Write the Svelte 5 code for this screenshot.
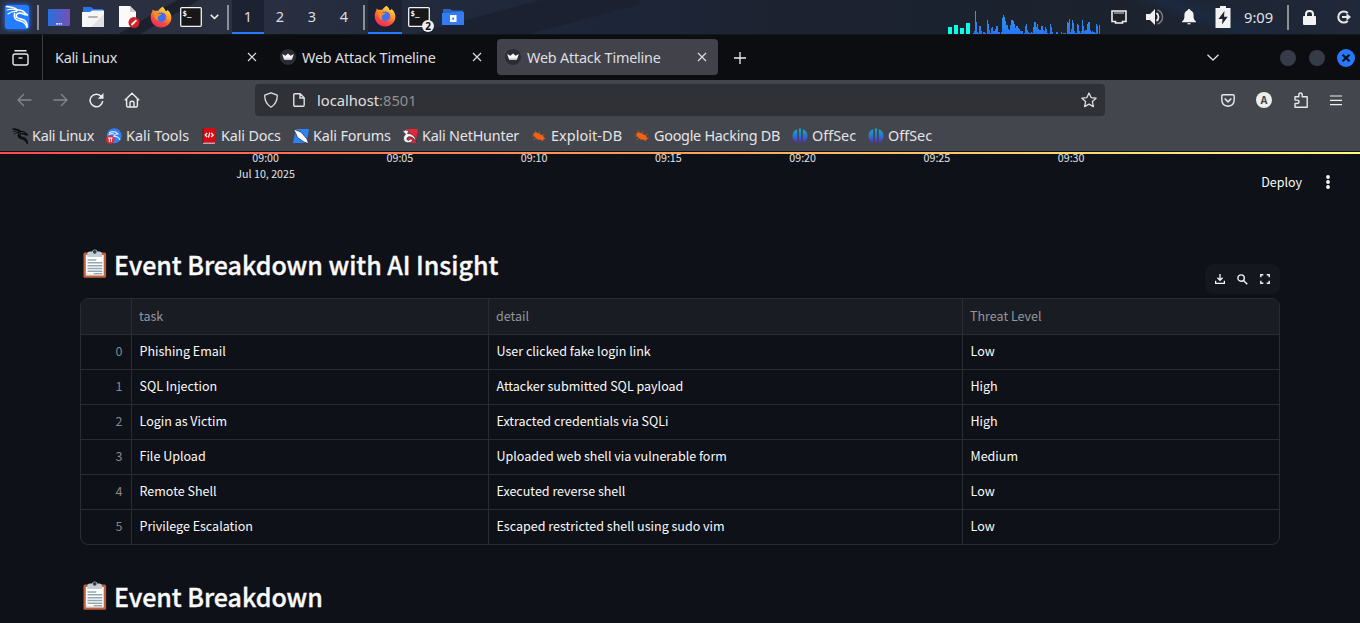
<script>
  const bars = [1,3,23,12,2,1,8,8,3,0,2,2,1,0,14,10,4,1,6,7,3,3,5,8,8,2,2,0,2,16,19,17,13,9,9,5,4,9,14,14,13,10,6,8,8,6,5,3,3,3,0,1,8,10,4,2,1,1,2,1,7,12,12,7,10,5,4,4,8,8,4,3,7,5,1,0,1,10,7,2,0,0,0,2,2,0,0,0,2,0,1,1,1,0,12,11,15,2,5,14,11,3,1,1,10,9,3,1,3,14,8,3,4,4,10,12,12,4,2,3,2,2,1,10,8,0,9];
  const meters = [7, 9, 6, 11];
  const bookmarks = [
    { icon: 'dragon', label: 'Kali Linux', w: 94, s: -0.28 },
    { icon: 'tools', label: 'Kali Tools', w: 95, s: 0 },
    { icon: 'docs', label: 'Kali Docs', w: 92, s: -0.15 },
    { icon: 'forums', label: 'Kali Forums', w: 109, s: -0.15 },
    { icon: 'hunter', label: 'Kali NetHunter', w: 129, s: -0.22 },
    { icon: 'bug', label: 'Exploit-DB', w: 103, s: 0.08 },
    { icon: 'bug', label: 'Google Hacking DB', w: 158, s: -0.27 },
    { icon: 'offsec', label: 'OffSec', w: 76, s: 0 },
    { icon: 'offsec', label: 'OffSec', w: 76, s: 0 }
  ];
  const ticks = ['09:00', '09:05', '09:10', '09:15', '09:20', '09:25', '09:30'];
  const rows = [
    ['Phishing Email', 'User clicked fake login link', 'Low'],
    ['SQL Injection', 'Attacker submitted SQL payload', 'High'],
    ['Login as Victim', 'Extracted credentials via SQLi', 'High'],
    ['File Upload', 'Uploaded web shell via vulnerable form', 'Medium'],
    ['Remote Shell', 'Executed reverse shell', 'Low'],
    ['Privilege Escalation', 'Escaped restricted shell using sudo vim', 'Low']
  ];
</script>

{#snippet dragonPath(color, sw)}
  <g fill="none" stroke={color} stroke-width={sw} stroke-linecap="round" stroke-linejoin="round">
    <path d="M2 5C6 3.6 9.5 4 12 5.4M3 9C6 6.6 9 6 12 6.6" stroke-width={sw * 0.7} />
    <path d="M1.5 1.5C6 1.8 10 2.6 12.5 5C15 4.8 18 5.6 19.5 7.5L22.5 10L19 9.4C15.5 7.4 11 7.8 11.2 11C11.5 14.2 16 13 19.2 15.2C21.5 16.8 22.4 19 22 22.3C20.8 18.4 18 16.6 14.5 15.8C10 14.8 8.4 12 9.6 8.4" />
  </g>
{/snippet}

{#snippet firefox()}
  <svg class="ff" width="22" height="22" viewBox="0 0 22 22">
    <defs>
      <linearGradient id="fire" x1=".8" y1="0" x2=".25" y2="1"><stop offset="0" stop-color="#fff14a" /><stop offset=".35" stop-color="#ffa42b" /><stop offset=".7" stop-color="#ff4a3c" /><stop offset="1" stop-color="#ed2564" /></linearGradient>
    </defs>
    <path d="M12.5.7C14 1.8 15.2 3.4 15.5 5C17 5.3 17.4 4.7 17.3 3.7C20 5.8 21.5 8.7 21.4 12C21.2 17.4 16.7 21.4 11.2 21.4C5.2 21.4.8 17 .7 11.2C.7 8.8 1.3 6.8 2.3 5.4L2.7 3.6L4.7 5.1C6 4.6 7 4.7 8.2 5C9 3.3 10.7 2 12.5.7Z" fill="url(#fire)" />
    <circle cx="11" cy="11.4" r="4.9" fill="#3b72f0" />
    <path d="M3.8 7.8C5.2 6.8 7 6.9 8.8 7.8L11.6 8.1C11.2 9.5 9.4 9.4 8.2 10.5C7.2 11.6 7.7 13.8 9 15C5.8 14.4 4 11.6 3.8 7.8Z" fill="#ff8b22" />
    <path d="M13.3 7.4C15.3 8.4 16 11 15 13.3" fill="none" stroke="#8a55df" stroke-width="1.6" />
  </svg>
{/snippet}

{#snippet terminal(dx)}
  <svg width="22" height="20" viewBox="0 0 22 20" style:margin-left={dx}>
    <rect x=".7" y=".7" width="20.6" height="18.6" rx="1" fill="#171717" stroke="#f2f2f2" stroke-width="1.3" />
    <text x="2.5" y="9.3" class="prompt">$_</text>
  </svg>
{/snippet}

{#snippet crown()}
  <svg width="16" height="16" viewBox="0 0 16 16">
    <circle cx="8" cy="8" r="8" fill="#2b2c36" />
    <path d="M2.2 5L5.3 6.7L8 4.4L10.7 6.7L13.8 5L12.2 9.8Q11.8 11 10.5 11H5.5Q4.2 11 3.8 9.8Z" fill="#f6f6f6" />
    <path d="M4.5 9.3H11.5L11 11H5Z" fill="#c8c8c8" />
  </svg>
{/snippet}

{#snippet cross()}
  <svg class="cross" width="10" height="10" viewBox="0 0 10 10"><path d="M1 1L9 9M9 1L1 9" stroke="#dedede" stroke-width="1.15" /></svg>
{/snippet}

{#snippet clipboard()}
  <svg class="clip" width="24" height="30" viewBox="0 0 24 30">
    <rect x=".5" y="3.5" width="22.6" height="25.3" rx="1.6" fill="#c2613f" />
    <path d="M2.8 6H20.7V26.5H10L2.8 24.5Z" fill="#fff" />
    <path d="M2.8 24.6H9V26.6H2.8Z" fill="#e0e7ea" />
    <path d="M4.3 8V5Q4.3 2.5 7 2.5H9Q9.8.4 11.7.4Q13.8.4 14.5 2.5H16.6Q19 2.5 19 5V8Z" fill="#c2ced6" />
    <circle cx="11.7" cy="2.8" r="1.9" fill="#34404a" />
    <path d="M4.5 11H13.3M4.5 13.8H19.3M4.5 16.7H19.3M4.5 19.5H19.3M4.5 22.2H19.3M10.5 24.8H19.3" stroke="#92a7b2" stroke-width="1.4" />
  </svg>
{/snippet}

<div class="screen">
  <header class="panel">
    <svg class="kali" width="24" height="24" viewBox="0 0 24 24">
      <rect width="24" height="24" rx="1.5" fill="#247cff" />
      {@render dragonPath('#fff', 1.6)}
    </svg>
    <i class="bar b1"></i>
    <svg class="desk" width="22" height="17" viewBox="0 0 22 17">
      <defs><linearGradient id="desk"><stop stop-color="#2870df" /><stop offset="1" stop-color="#7550b5" /></linearGradient></defs>
      <rect width="22" height="17" rx="1" fill="url(#desk)" />
      <path d="M8 14.8H10M10.5 14.8H12M12.5 14.8H14" stroke="#fff" stroke-width="1.3" />
    </svg>
    <svg class="folder" width="22" height="20" viewBox="0 0 22 20">
      <path d="M1 0H9L11.5 2H21V10H1Z" fill="#2b74e8" />
      <path d="M0 5H8L10 3.5H22V20H0Z" fill="#f6f6f6" /><path d="M22 7L9 20H22Z" fill="#e1e1e1" />
      <path d="M7 10H15" stroke="#b3b3b3" stroke-width="1.8" stroke-linecap="round" />
    </svg>
    <svg class="edit" width="21" height="22" viewBox="0 0 21 22">
      <path d="M0 0H11L17 6V21H0Z" fill="#fafafa" /><path d="M11 0V6H17Z" fill="#cdcdcd" />
      <circle cx="15" cy="16.5" r="5.5" fill="#d41f26" /><path d="M12.5 19L17.4 14.1" stroke="#fff" stroke-width="1.8" />
    </svg>
    <span class="ffa">{@render firefox()}</span>
    {@render terminal('8px')}
    <svg class="chev" width="9" height="6" viewBox="0 0 9 6"><path d="M.8.9L4.5 4.5L8.2.9" fill="none" stroke="#f2f2f2" stroke-width="1.5" /></svg>
    <i class="bar b2"></i>
    <nav class="spaces">
      {#each [1, 2, 3, 4] as n}<span class:on={n === 1}>{n}</span>{/each}
    </nav>
    <i class="bar b3"></i>
    <span class="task">{@render firefox()}</span>
    <span class="termtask">{@render terminal('0')}<b>2</b></span>
    <svg class="files" width="22" height="16" viewBox="0 0 22 16">
      <path d="M1 0H8L10 1.5H21V6H1Z" fill="#2566c8" /><path d="M0 4H8L10 3H22V16H0Z" fill="#347cf1" />
      <rect x="8" y="6" width="6.5" height="7" fill="#fff" /><rect x="10.2" y="8.7" width="2" height="2" fill="#347cf1" />
    </svg>
    <svg class="graph" width="153" height="24" viewBox="0 0 153 24" shape-rendering="crispEdges">
      <defs><linearGradient id="wave" gradientUnits="userSpaceOnUse" x1="0" y1="0" x2="0" y2="24"><stop stop-color="#27a7ea" /><stop offset="1" stop-color="#2874f4" /></linearGradient></defs>
      {#each meters as h, i}<rect x={i * 6} y={24 - h} width="4" height={h} fill="#08ffe5" />{/each}
      {#each bars as h, i}<rect x={25 + i} y={24 - h} width="1" height={h} fill="url(#wave)" />{/each}
    </svg>
    <svg class="net" width="16" height="14" viewBox="0 0 16 14"><path d="M1 1H15V11.5H11.5V13H4.5V11.5H1Z" fill="#20222a" stroke="#f0f0f0" stroke-width="1.6" /><path d="M4 1.5V4M6 1.5V4M8 1.5V4M10 1.5V4M12 1.5V4" stroke="#ddd" /></svg>
    <svg class="vol" width="18" height="16" viewBox="0 0 18 16"><path d="M0 5H4L9 0V16L4 11H0Z" fill="#f0f0f0" /><path d="M10.5 4Q12.5 5.5 12.5 8Q12.5 10.5 10.5 12" fill="none" stroke="#eee" stroke-width="1.8" /><path d="M11.5 1Q16.5 3 16.5 8Q16.5 13 11.5 15" fill="none" stroke="#77797e" stroke-width="1.5" /></svg>
    <svg class="bell" width="14" height="16" viewBox="0 0 14 16"><path d="M7 0Q8.2 0 8.3 1.2Q11.5 2.2 11.6 6V8.5Q11.8 10.8 14 12.5V13.2H0V12.5Q2.2 10.8 2.4 8.5V6Q2.5 2.2 5.7 1.2Q5.8 0 7 0Z" fill="#f2f2f2" /><path d="M5.5 14.7H8.5" stroke="#ddd" stroke-width="1.3" /></svg>
    <svg class="batt" width="16" height="22" viewBox="0 0 16 22"><path d="M5 0H11V2H15.5V22H.5V2H5Z" fill="#f2f2f2" /><path d="M9.5 5L3.5 13H7.5L7 18.5L12.7 10.8H9Z" fill="#20222b" /></svg>
    <span class="clock">9:09</span>
    <i class="bar b4"></i>
    <svg class="lock" width="13" height="15" viewBox="0 0 13 15"><rect y="6" width="13" height="9" rx="1" fill="#f2f2f2" /><path d="M3 7V4.2Q3 1 6.5 1T10 4.2V7" fill="none" stroke="#f2f2f2" stroke-width="2" /></svg>
    <svg class="out" width="14" height="14" viewBox="0 0 14 14"><path d="M10.8 3A5.6 5.6 0 1 0 10.8 11" fill="none" stroke="#e7e7e7" stroke-width="2" /><path d="M5 6H9.5V3.3L14 7L9.5 10.7V8H5Z" fill="#e7e7e7" /></svg>
  </header>

  <div class="tabs">
    <div class="view"><svg width="17" height="16" viewBox="0 0 17 16" fill="none" stroke="#e8e8e8" stroke-width="1.4"><path d="M3 .8H14" stroke-linecap="round" /><rect x="1" y="4" width="15" height="11" rx="2" /><path d="M6.5 8H10.5" /></svg></div>
    <div class="tab first"><span>Kali Linux</span>{@render cross()}</div>
    <div class="tab">{@render crown()}<span>Web Attack Timeline</span>{@render cross()}</div>
    <div class="tab active">{@render crown()}<span>Web Attack Timeline</span>{@render cross()}</div>
    <svg class="plus" width="12" height="12" viewBox="0 0 12 12"><path d="M6 0V12M0 6H12" stroke="#eee" stroke-width="1.3" /></svg>
    <svg class="down" width="12" height="7" viewBox="0 0 12 7"><path d="M.5.7L6 6L11.5.7" fill="none" stroke="#ddd" stroke-width="1.3" /></svg>
    <i class="dot d1"></i><i class="dot d2"></i>
    <svg class="close" width="18" height="18" viewBox="0 0 18 18"><circle cx="9" cy="9" r="9" fill="#2777ff" /><path d="M5.5 5.7L12.5 12.3M12.5 5.7L5.5 12.3" stroke="#0d0f14" stroke-width="2.2" /></svg>
  </div>

  <div class="chrome">
    <div class="toolbar">
      <svg class="back" width="15" height="14" viewBox="0 0 15 14" fill="none" stroke="#85868b" stroke-width="1.3"><path d="M7 1L1 7L7 13M1 7H14.5" /></svg>
      <svg class="fwd" width="15" height="14" viewBox="0 0 15 14" fill="none" stroke="#85868b" stroke-width="1.3"><path d="M8 1L14 7L8 13M14 7H.5" /></svg>
      <svg class="reload" width="15" height="15" viewBox="0 0 15 15"><path d="M12.5 3.7A6.3 6.3 0 1 0 13.7 8" fill="none" stroke="#eee" stroke-width="1.5" /><path d="M14.5 0V5.8H8.8Z" fill="#eee" /></svg>
      <svg class="home" width="16" height="16" viewBox="0 0 16 16" fill="none" stroke="#eee" stroke-width="1.4" stroke-linejoin="round"><path d="M.8 8.3L8 1.3L15.2 8.3M2.6 7V13.8Q2.6 15 3.8 15H12.2Q13.4 15 13.4 13.8V7M6 15V10.5Q6 9.3 8 9.3T10 10.5V15" /></svg>
      <div class="url">
        <svg width="14" height="16" viewBox="0 0 14 16"><path d="M7 .8L13.2 3.2Q13.7 10.5 7 15.2Q.3 10.5.8 3.2Z" fill="none" stroke="#e0e0e0" stroke-width="1.3" stroke-linejoin="round" /></svg>
        <svg class="doc" width="12" height="14" viewBox="0 0 12 14"><path d="M2 .8H7.2L11.2 4.8V12Q11.2 13.2 10 13.2H2Q.8 13.2.8 12V2Q.8.8 2 .8ZM7 1V5H11" fill="none" stroke="#e0e0e0" stroke-width="1.4" /></svg>
        <span class="host">localhost<em>:8501</em></span>
        <svg class="star" width="16" height="16" viewBox="0 0 16 16"><path d="M8 1L10.1 5.6L15.1 6.2L11.4 9.6L12.4 14.6L8 12.1L3.6 14.6L4.6 9.6L.9 6.2L5.9 5.6Z" fill="none" stroke="#ddd" stroke-width="1.3" stroke-linejoin="round" /></svg>
      </div>
      <svg class="pocket" width="14" height="13" viewBox="0 0 14 13" fill="none" stroke="#e8e8e8" stroke-width="1.4"><path d="M2 .8H12Q13.2.8 13.2 2V5.8Q13 12 7 12.2Q1 12 .8 5.8V2Q.8.8 2 .8Z" /><path d="M3.7 4.5L7 7.8L10.3 4.5" stroke-width="1.6" /></svg>
      <span class="avatar">A</span>
      <svg class="ext" width="14" height="16" viewBox="0 0 14 16"><path d="M1 4.7H4.8V3Q4.8 1 6.5 1T8.2 3V4.7H13.2V15.2H1V11.5H3Q5 11.5 5 9.8T3 8.1H1Z" fill="none" stroke="#e8e8e8" stroke-width="1.4" stroke-linejoin="round" /></svg>
      <svg class="menu" width="12" height="11" viewBox="0 0 12 11"><path d="M0 1H12M0 5.3H12M0 9.6H12" stroke="#eee" stroke-width="1.2" /></svg>
    </div>
    <nav class="marks">
      {#each bookmarks as b}
        <a style:width="{b.w}px" style:letter-spacing="{b.s}px">
          <svg width="16" height="16" viewBox="0 0 16 16">
            {#if b.icon === 'dragon'}
              <g transform="scale(.69)">{@render dragonPath('#0a0b0c', 2)}</g>
            {:else if b.icon === 'tools'}
              <circle cx="8.2" cy="7.8" r="7.5" fill="#327ff8" />
              <path d="M3 5Q8 2 12 6Q8 6 8 8.5Q12 8 14 12M2.5 7Q5 5 8 6" fill="none" stroke="#d9e8ff" stroke-width="1.2" />
              <circle cx="4.3" cy="11.6" r="4.2" fill="#ec2734" /><path d="M2 10H6.6M3.4 10V14M5.4 10V14" stroke="#fff" stroke-width="1" />
            {:else if b.icon === 'docs'}
              <path d="M2 0H14V15H2Z" fill="#d40d16" /><path d="M2 15.2H14" stroke="#e6d9d9" /><path d="M2 0V15" stroke="#601a20" />
              <path d="M6.2 5L4.2 7L6.2 9M10.2 5L12.2 7L10.2 9M8.8 4.5L7.5 9.5" fill="none" stroke="#fff" stroke-width="1.2" />
            {:else if b.icon === 'forums'}
              <path d="M3 1H16L13.5 15H0Z" fill="#2b83fb" /><path d="M.3 1L5 2.8L8 4L14 11L15.7 15.7L11 14L4.5 9.5L3 6Z" fill="#f6f7f8" stroke="#20252e" stroke-width=".7" />
            {:else if b.icon === 'hunter'}
              <path d="M3 1H16L13.5 15H5Z" fill="#e92435" />
              <path d="M.6 3.4Q3 1 7 3L5.5 5.5Q12.5 5 14.6 14Q10 7.4 6 9Q3.6 11 6 12.6L9.5 10.6L10.6 13.4Q5 16.4 2 13Q0 9 3.6 6Z" fill="#f5f5f5" stroke="#20252e" stroke-width=".7" />
            {:else if b.icon === 'bug'}
              <path d="M2 6Q4.5 3.3 8 5.7L12 7.6L13 9.7L15 10.7L12.5 11.3L12 13L9 11.6Q6 12 5 10Q3 9 2 6Z" fill="#f26213" />
              <path d="M5 5L4 2.5M8 6L8.5 3.5M3 8L.7 8M4.5 10.5L2.2 11.8M11 7.5L13.5 6" stroke="#c85a20" stroke-width=".8" />
            {:else}
              <defs><linearGradient id="off" gradientUnits="userSpaceOnUse" x1="0" y1="0" x2="0" y2="16"><stop stop-color="#12b0c4" /><stop offset=".5" stop-color="#2b74cf" /><stop offset="1" stop-color="#5a1fdc" /></linearGradient></defs>
              <path d="M5.2 1.3V14.7Q.5 12.9.5 8T5.2 1.3ZM10.8 1.3V14.7Q15.5 12.9 15.5 8T10.8 1.3Z" fill="url(#off)" />
              <path d="M7 .6H9V12L8.4 15.6H7.6L7 12Z" fill="url(#off)" />
            {/if}
          </svg>
          <span>{b.label}</span>
        </a>
      {/each}
    </nav>
  </div>
  <div class="rainbow"></div>

  <main>
    <section class="top">
      <div class="axis">
        {#each ticks as t, i}
          <div><span>{t}</span>{#if i === 0}<span>Jul 10, 2025</span>{/if}</div>
        {/each}
      </div>
      <div class="deploy"><span>Deploy</span><svg width="4" height="14" viewBox="0 0 4 14" fill="#fafafa"><circle cx="2" cy="2" r="1.9" /><circle cx="2" cy="7" r="1.9" /><circle cx="2" cy="12" r="1.9" /></svg></div>
    </section>

    <div class="headline">
      <h3>{@render clipboard()}<span>Event Breakdown with AI Insight</span></h3>
      <div class="tools">
        <svg width="10" height="10" viewBox="0 0 10 10" fill="none" stroke="#f5f5f5" stroke-width="1.3"><path d="M5 0V6M2.4 3.7L5 6.3L7.6 3.7M.6 6.8V9.3H9.4V6.8" /></svg>
        <svg width="11" height="11" viewBox="0 0 11 11" fill="none" stroke="#f5f5f5" stroke-width="1.4"><circle cx="4.1" cy="4.1" r="3.2" /><path d="M6.5 6.5L10.3 10.3" /></svg>
        <svg width="10" height="10" viewBox="0 0 10 10" fill="none" stroke="#f5f5f5" stroke-width="1.4"><path d="M.8 3.3V.8H3.3M6.7.8H9.2V3.3M9.2 6.7V9.2H6.7M3.3 9.2H.8V6.7" /></svg>
      </div>
    </div>

    <div class="table">
      <div class="row head"><span></span><span>task</span><span>detail</span><span>Threat Level</span></div>
      {#each rows as r, i}
        <div class="row"><span class="idx">{i}</span>{#each r as c}<span>{c}</span>{/each}</div>
      {/each}
    </div>

    <h3 class="second">{@render clipboard()}<span>Event Breakdown</span></h3>
  </main>
</div>

<style>
  :global(body) { margin: 0; background: #0e1117; overflow: hidden; }
  .screen { width: 1360px; height: 623px; overflow: hidden; background: #0e1117; color: #fafafa; font-family: "Noto Sans", sans-serif; }
  svg { display: block; flex: none; }

  .panel { display: flex; align-items: center; height: 35px; box-sizing: border-box; border-bottom: 1px solid #15161b;
    background:
      linear-gradient(150deg, transparent 0 48%, #151922b0 49% 58%, transparent 60%) 75px 0 / 150px 35px no-repeat,
      linear-gradient(165deg, transparent 40%, #1b2131 42% 70%, transparent 72%) 380px 0 / 260px 35px no-repeat,
      linear-gradient(20deg, transparent 35%, #1b2940 45%, transparent 65%) 1120px 0 / 200px 35px no-repeat,
      linear-gradient(90deg, #282e3f 0, #2c3142 16%, #232b3d 28%, #1d2639 45%, #1d2230 58%, #1b222f 70%, #1c222d 82%, #20283a 100%); }
  .panel > * { flex: none; }
  .kali { margin: 0 0 0 5px; box-shadow: 0 0 5px #2878ff; border-radius: 2px; }
  .bar { width: 2px; height: 25px; background: #8d9097; }
  .b1 { margin-left: 8px; }
  .desk { margin-left: 9px; }
  .folder { margin-left: 12px; }
  .edit { margin-left: 15px; }
  .ffa { margin-left: 10px; }
  .prompt { font: bold 7.5px "DejaVu Sans Mono", monospace; fill: #fff; }
  .chev { margin-left: 8px; }
  .b2 { margin-left: 8px; }
  .spaces { display: flex; margin-left: 3px; height: 34px; }
  .spaces span { width: 32px; text-align: center; font-size: 14.5px; line-height: 33px; color: #dedfe2; box-sizing: border-box; }
  .spaces .on { background: #1c2231; border-bottom: 2px solid #2777ff; }
  .b3 { margin-left: 3px; }
  .task { display: flex; justify-content: center; align-items: center; width: 34px; height: 34px; box-sizing: border-box; margin-left: 3px; background: #1c2231; border-bottom: 2px solid #2777ff; }
  .termtask { position: relative; margin-left: 6px; }
  .termtask b { position: absolute; left: 14px; top: 13px; width: 12px; height: 12px; border-radius: 50%; background: #eee; color: #111; font-size: 10px; line-height: 12px; text-align: center; }
  .files { margin-left: 12px; }
  .graph { margin-left: 484px; align-self: flex-end; }
  .net { margin-left: 10px; }
  .vol { margin-left: 19px; }
  .bell { margin-left: 18px; }
  .batt { margin-left: 19px; margin-top: -1px; }
  .clock { margin-left: 13px; width: 31px; font-size: 14.7px; line-height: 32px; color: #e2e3e6; }
  .b4 { margin-left: 12px; }
  .lock { margin-left: 14px; }
  .out { margin-left: 21px; }

  .tabs { display: flex; align-items: center; height: 45px; background: #0c0d10; font-size: 14.4px; letter-spacing: -.2px; color: #dedee0; }
  .tabs > * { flex: none; }
  .view { display: flex; align-items: center; justify-content: center; width: 43px; padding-right: 2px; box-sizing: border-box; height: 45px; border-right: 1px solid #3e3f43; }
  .tab { display: flex; align-items: center; box-sizing: border-box; width: 221px; height: 36px; padding: 0 11px 0 8px; margin: -1px 4px 0 0; border-radius: 4px; }
  .tab span { margin-left: 6px; flex: 1; white-space: nowrap; }
  .first { padding-left: 6px; width: 225px; letter-spacing: -.28px; }
  .active { background: #42434a; }
  .plus { margin-left: 12px; }
  .down { margin-left: 461px; }
  .dot { width: 16px; height: 16px; border-radius: 50%; background: #373b48; }
  .d1 { margin-left: 61px; }
  .d2 { margin-left: 13px; }
  .close { margin-left: 12px; }

  .chrome { height: 71px; background: #44464d; border-bottom: 1px solid #101116; }
  .toolbar { display: flex; align-items: center; height: 40px; }
  .toolbar > * { flex: none; }
  .back { margin-left: 16.5px; }
  .fwd { margin-left: 21px; }
  .reload { margin-left: 21px; }
  .home { margin-left: 20px; }
  .url { display: flex; align-items: center; width: 850px; height: 32px; box-sizing: border-box; margin-left: 115.5px; padding: 0 8px 0 9px; border-radius: 4px; background: #303136; }
  .doc { margin-left: 15px; }
  .host { margin-left: 12px; flex: 1; font-size: 14.7px; color: #e0e0e2; }
  .host em { font-style: normal; color: #8e8f93; }
  .pocket { margin-left: 116px; }
  .avatar { margin-left: 21px; width: 16px; height: 16px; border-radius: 50%; background: #eee; color: #44464d; font-size: 10px; font-weight: 700; line-height: 16px; text-align: center; }
  .ext { margin-left: 21.5px; }
  .menu { margin-left: 22.5px; }
  .marks { display: flex; align-items: center; height: 31px; padding-left: 12px; font-size: 14.4px; color: #e4e4e6; }
  .marks a { display: flex; align-items: center; flex: none; white-space: nowrap; }
  .marks span { margin-left: 4px; }
  .rainbow { height: 2px; background: linear-gradient(90deg, #ff4b4b, #ffa15c 50%, #fffd80); }

  main { font-family: "Noto Sans CJK SC", "Noto Sans", sans-serif; padding: 0 80px; }
  .top { display: flex; justify-content: space-between; height: 92px; margin-right: -50px; overflow: hidden; }
  .axis { display: flex; flex: none; margin-left: 118.5px; font-size: 10.7px; color: #e4e5e8; }
  .axis div { width: 134.25px; display: flex; flex-direction: column; align-items: center; }
  .axis span { line-height: 16px; height: 16px; margin-top: -4px; }
  .axis span + span { margin-top: 0; }
  .deploy { display: flex; align-items: center; gap: 24px; flex: none; height: 20px; line-height: 20px; margin-top: 18px; font-size: 12.5px; }
  .deploy span { margin-top: -1px; }
  .headline { display: flex; justify-content: space-between; height: 52px; }
  h3 { margin: 0; display: flex; height: 40px; align-items: center; font-size: 25px; font-weight: 500; line-height: 40px; white-space: nowrap; letter-spacing: -.03px; }
  h3 span { margin-top: -4px; -webkit-text-stroke: .35px #fafafa; }
  .clip { margin: -4px 7.5px 0 2.5px; }
  .tools { display: flex; align-items: center; justify-content: space-between; box-sizing: border-box; width: 75px; height: 30px; margin-top: 18px; padding: 0 10px; border-radius: 8px; background: #14171e; }
  .table { border: 1px solid #2a2c32; border-radius: 8px; overflow: hidden; }
  .row { display: grid; grid-template-columns: 51px 357px 474px 1fr; height: 35px; font-size: 12.53px; line-height: 32px; }
  .row span { border-right: 1px solid #2a2c32; border-bottom: 1px solid #2a2c32; padding-left: 7.5px; }
  .row span:last-child { border-right: 0; }
  .row:last-child { height: 34px; }
  .row:last-child span { border-bottom: 0; }
  .head { height: 36px; background: #1a1c24; color: #94969b; line-height: 33px; }
  .head span { padding-left: 7px; }
  .row .idx { padding: 0 8.5px 0 0; text-align: right; color: #85878c; }
  .second { margin-top: 33px; }
</style>
